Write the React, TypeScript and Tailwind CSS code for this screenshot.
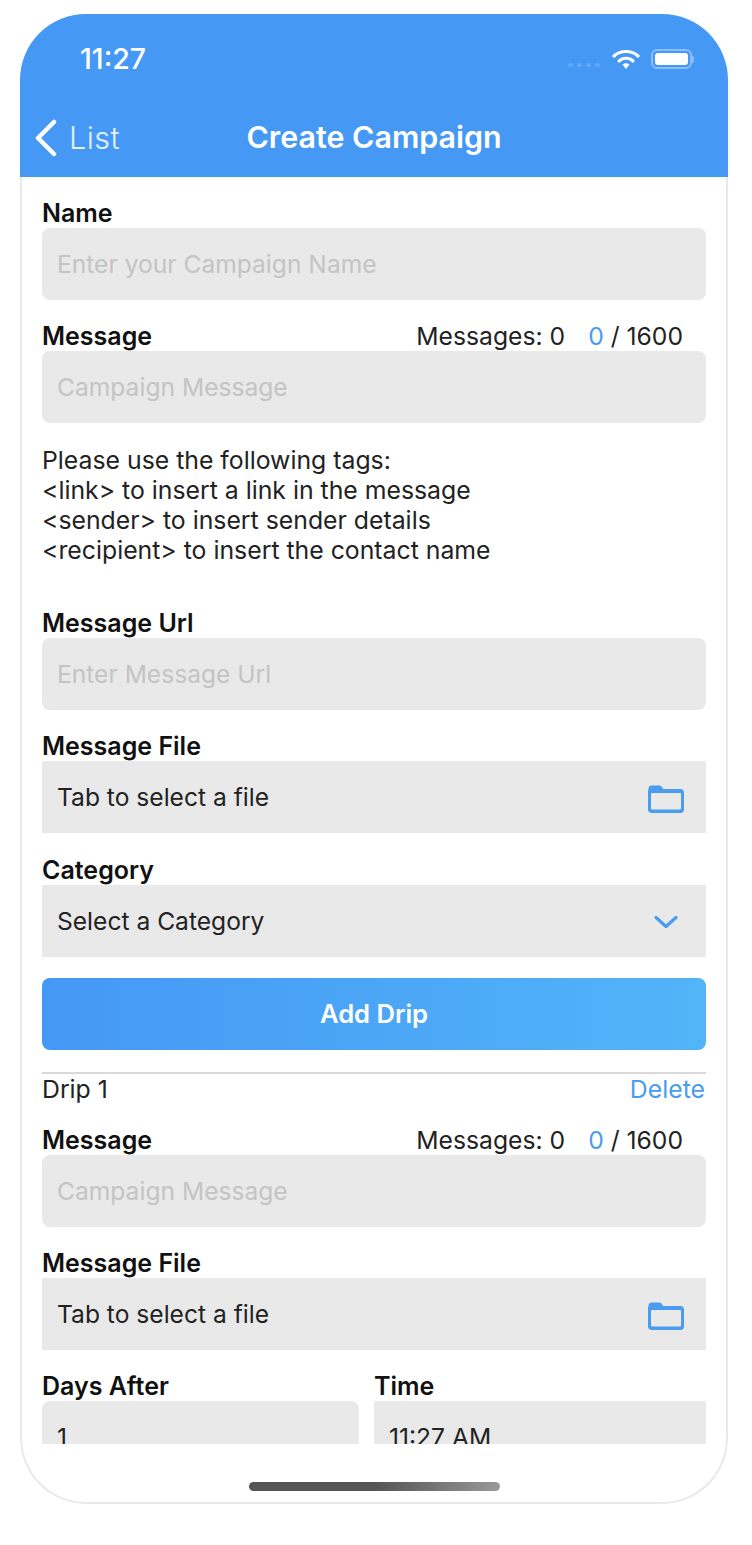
import type { ReactNode } from "react";

function Folder() {
  return (
    <svg width="38" height="30" viewBox="0 0 38 30" fill="none">
      <path
        d="M1.500 6V4.500C1.500 2.800 2.800 1.500 4.500 1.500H12c1.400 0 2.200.6 3 1.800l1.200 1.700h17.300c2 0 3.500 1.500 3.500 3.500v17c0 2-1.500 3.500-3.500 3.500h-29c-2 0-3.500-1.500-3.500-3.500V6z"
        fill="#4a9cee"
      />
      <rect x="4" y="9" width="30" height="16.500" rx="1" fill="#e9e9e9" />
    </svg>
  );
}

function Chevron() {
  return (
    <svg width="24" height="14" viewBox="0 0 24 14" fill="none">
      <path d="M2 2.500L12 11.500L22 2.500" stroke="#4a9cee" strokeWidth="3.200" strokeLinecap="round" strokeLinejoin="round" />
    </svg>
  );
}

function Label({ children }: { children: ReactNode }) {
  return <div className="h-[30px] pt-[2px] shrink-0 flex items-center text-[25px] font-semibold text-[#111]">{children}</div>;
}

function MessageLabel() {
  return (
    <div className="h-[30px] flex items-center justify-between pr-[23px]">
      <Label>Message</Label>
      <div className="pt-[2px] text-[24.7px] text-[#222]">
        Messages: 0<span className="ml-[23px] text-[#4a9cee]">0</span> / 1600
      </div>
    </div>
  );
}

function Field({ children, right, square, muted }: { children: ReactNode; right?: ReactNode; square?: boolean; muted?: boolean }) {
  return (
    <div
      className={`h-[72px] shrink-0 bg-[#e9e9e9] pl-[15px] flex items-center justify-between text-[24.6px] ${square ? "" : "rounded-lg"} ${muted ? "text-[#c4c4c4]" : "text-[#222]"}`}
    >
      <span>{children}</span>
      {right}
    </div>
  );
}

export default function App() {
  return (
    <div className="w-[752px] h-[1545px] bg-white pt-[14px] pl-[20px] font-['Inter','Liberation_Sans',sans-serif]">
      <div className="relative w-[708px] h-[1490px] rounded-[66px] overflow-hidden flex flex-col bg-white">
        <header className="h-[163px] shrink-0 bg-[#4598f4] text-white">
          <div className="h-[88px] flex items-center justify-between pl-[60px] pr-[34px] pt-[2px]">
            <span className="text-[28.5px] font-medium">11:27</span>
            <div className="flex items-center gap-[11px]">
              <div className="flex gap-[4px] mr-[1px] mt-[12px]">
                <div className="w-[5px] h-[4px] rounded-full bg-[#62a9f6]" />
                <div className="w-[5px] h-[4px] rounded-full bg-[#62a9f6]" />
                <div className="w-[5px] h-[4px] rounded-full bg-[#62a9f6]" />
                <div className="w-[5px] h-[4px] rounded-full bg-[#62a9f6]" />
              </div>
              <svg width="28" height="21" viewBox="0 0 28 21" fill="none">
                <path d="M2 7C8.500 1 19.500 1 26 7" stroke="white" strokeWidth="3.200" strokeLinecap="round" />
                <path d="M7 12C11 8.300 17 8.300 21 12" stroke="white" strokeWidth="3.200" strokeLinecap="round" />
                <path d="M10.500 15.500C12.500 13.800 15.500 13.800 17.500 15.500L14 20z" fill="white" />
              </svg>
              <div className="flex items-center">
                <div className="w-[41px] h-[20px] rounded-[6px] border-2 border-[#8bbef8] p-[2px]">
                  <div className="w-full h-full rounded-[3px] bg-white" />
                </div>
                <div className="w-[2px] h-[7px] rounded-r bg-[#8bbef8]" />
              </div>
            </div>
          </div>
          <div className="relative h-[75px] flex items-center justify-center pb-[4px]">
            <div className="absolute left-[14px] top-[13px] flex items-center gap-[11px]">
              <svg width="24" height="38" viewBox="0 0 24 38" fill="none">
                <path d="M20 3L4 19L20 35" stroke="white" strokeWidth="4.500" strokeLinecap="round" strokeLinejoin="round" />
              </svg>
              <span className="text-[30.5px] font-light text-[#e4f0fe] tracking-[0.5px]">List</span>
            </div>
            <h1 className="text-[30.4px] font-semibold">Create Campaign</h1>
          </div>
        </header>

        <main className="flex-1 min-h-0 px-[20px] border-x-2 border-b-2 border-[#e8e8e8] rounded-b-[66px]">
          <div className="h-[1267px] overflow-hidden flex flex-col pt-[21px]">
            <Label>Name</Label>
            <Field muted>Enter your Campaign Name</Field>

            <div className="mt-[21px]">
              <MessageLabel />
            </div>
            <Field muted>Campaign Message</Field>

            <p className="mt-[22px] shrink-0 text-[24.8px] leading-[30px] text-[#222]">
              Please use the following tags:
              <br />
              {"<link> to insert a link in the message"}
              <br />
              {"<sender> to insert sender details"}
              <br />
              {"<recipient> to insert the contact name"}
            </p>

            <div className="mt-[43px]">
              <Label>Message Url</Label>
            </div>
            <Field muted>Enter Message Url</Field>

            <div className="mt-[21px]">
              <Label>Message File</Label>
            </div>
            <Field square right={<div className="mr-[21px] mt-[3px]"><Folder /></div>}>
              Tab to select a file
            </Field>

            <div className="mt-[22px]">
              <Label>Category</Label>
            </div>
            <Field square right={<div className="mr-[28px] mt-[2px]"><Chevron /></div>}>
              Select a Category
            </Field>

            <button className="mt-[21px] h-[72px] shrink-0 rounded-lg bg-gradient-to-r from-[#4598f4] to-[#52b4f9] text-[25.6px] font-semibold text-white">
              Add Drip
            </button>

            <div className="mt-[22px] h-[2px] shrink-0 bg-[#d9d9d9]" />
            <div className="h-[30px] mt-[1px] shrink-0 pr-[1px] flex items-center justify-between text-[24.8px] text-[#222]">
              <span>Drip 1</span>
              <span className="text-[#4a9cee]">Delete</span>
            </div>

            <div className="mt-[20px]">
              <MessageLabel />
            </div>
            <Field muted>Campaign Message</Field>

            <div className="mt-[21px]">
              <Label>Message File</Label>
            </div>
            <Field square right={<div className="mr-[21px] mt-[3px]"><Folder /></div>}>
              Tab to select a file
            </Field>

            <div className="mt-[21px] shrink-0 grid grid-cols-[317px_332px] gap-x-[15px]">
              <div>
                <Label>Days After</Label>
                <Field>1</Field>
              </div>
              <div>
                <Label>Time</Label>
                <Field square>11:27 AM</Field>
              </div>
            </div>
          </div>
        </main>

        <div className="absolute bottom-[13px] left-[229px] w-[251px] h-[9px] rounded-full bg-gradient-to-r from-[#555] via-[#555] to-[#999]" />
      </div>
    </div>
  );
}
